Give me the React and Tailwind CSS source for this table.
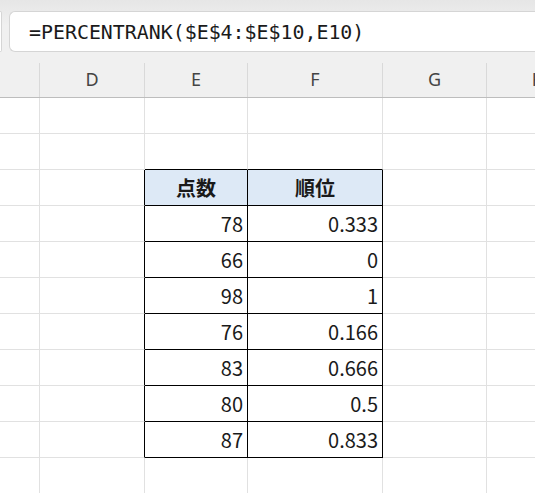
const cols = [
  { key: "A", w: 40 },
  { key: "D", w: 105 },
  { key: "E", w: 103 },
  { key: "F", w: 135 },
  { key: "G", w: 104 },
  { key: "H", w: 104 },
];

const data = [
  ["78", "0.333"],
  ["66", "0"],
  ["98", "1"],
  ["76", "0.166"],
  ["83", "0.666"],
  ["80", "0.5"],
  ["87", "0.833"],
];

const Cell = ({ w, right, bottom, children, className = "" }) => (
  <div
    className={`shrink-0 h-[36px] border-r border-b flex items-center ${right ? "border-r-black" : "border-r-[#e1e1e1]"} ${bottom ? "border-b-black" : "border-b-[#e1e1e1]"} ${className}`}
    style={{ width: w }}
  >
    {children}
  </div>
);

const App = () => {
  const rows = [];
  for (let r = 0; r < 11; r++) {
    // r=2 header, r=3..9 data
    const inTable = r >= 2 && r <= 9;
    rows.push(
      <div key={r} className="flex">
        {cols.map((c, i) => {
          const isE = c.key === "E";
          const isF = c.key === "F";
          const tableCell = inTable && (isE || isF);
          const right = (inTable && (c.key === "D" || isE || isF));
          const bottom = (r === 1 && (isE || isF)) || tableCell;
          let content = null;
          let cls = "";
          if (tableCell && r === 2) {
            cls = "bg-[#dde9f6] justify-center font-bold text-[#1a1a1a]";
            content = isE ? "点数" : "順位";
          } else if (tableCell) {
            cls = "justify-end pr-[4px] text-[#1a1a1a]";
            content = data[r - 3][isE ? 0 : 1];
          }
          return (
            <Cell key={i} w={c.w} right={right} bottom={bottom} className={cls}>
              {content}
            </Cell>
          );
        })}
      </div>
    );
  }

  return (
    <div className="w-[535px] h-[493px] overflow-hidden bg-white text-[20px] font-['Noto_Sans_CJK_JP',sans-serif]">
      <div className="bg-[#f0f0f0] border-b border-[#bdbdbd] h-[98px] flex flex-col">
        <div className="h-[52px] pt-[11px] flex gap-[7px] pl-0 bg-gradient-to-b from-[#e6e6e6] via-[#f0f0f0] to-[#f0f0f0]">
          <div className="w-[2px] h-[41px] bg-white border-y border-r border-[#d5d5d5] rounded-r-md" />
          <div className="flex-1 h-[41px] bg-white border border-r-0 border-[#d5d5d5] rounded-l-md flex items-center pl-[19px] pt-[2px] font-['DejaVu_Sans_Mono',monospace] text-[19.9px] text-[#1a1a1a] whitespace-nowrap">
            =PERCENTRANK($E$4:$E$10,E10)
          </div>
        </div>
        <div className="flex-1 flex pt-[11px] font-['Noto_Sans',sans-serif] text-[18px] text-[#444]">
          {cols.map((c, i) => (
            <div
              key={i}
              className="shrink-0 h-full border-r border-[#d9d9d9] flex items-center justify-center pb-[1px]"
              style={{ width: c.w }}
            >
              {c.key === "A" ? "" : c.key}
            </div>
          ))}
        </div>
      </div>
      <div className="flex flex-col">{rows}</div>
    </div>
  );
};

export default App;
